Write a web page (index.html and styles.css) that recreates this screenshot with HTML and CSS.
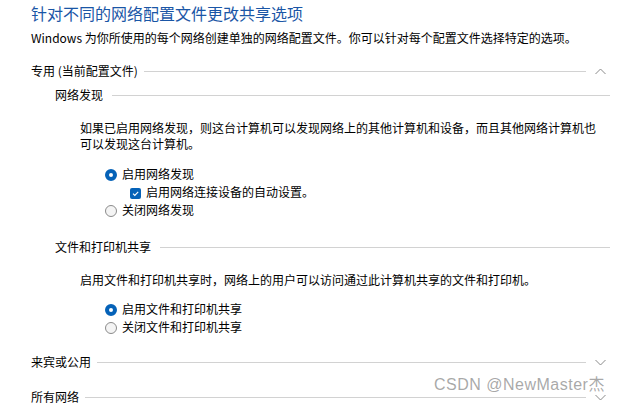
FILE: index.html
```html
<!DOCTYPE html>
<html lang="zh-CN">
<head>
<meta charset="utf-8">
<title>高级共享设置</title>
<link rel="stylesheet" href="styles.css">
</head>
<body>
<div class="page">
  <h1 class="title">针对不同的网络配置文件更改共享选项</h1>
  <p class="intro">Windows 为你所使用的每个网络创建单独的网络配置文件。你可以针对每个配置文件选择特定的选项。</p>

  <section class="profile">
    <div class="profile-head">
      <span class="head-text">专用 (当前配置文件)</span>
      <span class="rule"></span>
      <span class="chev"><svg width="11" height="7" viewBox="0 0 11 7"><polyline points="0.5,6 5.5,1 10.5,6" fill="none" stroke="#8a8a8a" stroke-width="1"/></svg></span>
    </div>

    <div class="group">
      <div class="group-head"><span class="head-text">网络发现</span><span class="rule"></span></div>
      <p class="group-desc">如果已启用网络发现，则这台计算机可以发现网络上的其他计算机和设备，而且其他网络计算机也可以发现这台计算机。</p>
      <div class="options">
        <div class="opt"><span class="radio on"></span><span>启用网络发现</span></div>
        <div class="opt sub"><span class="check"><svg width="11" height="11" viewBox="0 0 11 11"><polyline points="3,5.6 4.8,7.4 8.2,3.8" fill="none" stroke="#fff" stroke-width="1.1"/></svg></span><span>启用网络连接设备的自动设置。</span></div>
        <div class="opt"><span class="radio"></span><span>关闭网络发现</span></div>
      </div>
    </div>

    <div class="group">
      <div class="group-head"><span class="head-text">文件和打印机共享</span><span class="rule"></span></div>
      <p class="group-desc">启用文件和打印机共享时，网络上的用户可以访问通过此计算机共享的文件和打印机。</p>
      <div class="options">
        <div class="opt"><span class="radio on"></span><span>启用文件和打印机共享</span></div>
        <div class="opt"><span class="radio"></span><span>关闭文件和打印机共享</span></div>
      </div>
    </div>
  </section>

  <section class="profile">
    <div class="profile-head">
      <span class="head-text">来宾或公用</span>
      <span class="rule"></span>
      <span class="chev"><svg width="11" height="7" viewBox="0 0 11 7"><polyline points="0.5,1 5.5,6 10.5,1" fill="none" stroke="#8a8a8a" stroke-width="1"/></svg></span>
    </div>
  </section>

  <section class="profile">
    <div class="profile-head">
      <span class="head-text">所有网络</span>
      <span class="rule"></span>
      <span class="chev"><svg width="11" height="7" viewBox="0 0 11 7"><polyline points="0.5,1 5.5,6 10.5,1" fill="none" stroke="#8a8a8a" stroke-width="1"/></svg></span>
    </div>
  </section>
</div>
<div class="watermark">CSDN @NewMaster杰</div>
</body>
</html>
```

FILE: styles.css
```css
html, body {
  margin: 0;
  padding: 0;
  background: #ffffff;
}

body {
  font-family: "Noto Sans CJK SC", "Noto Sans", sans-serif;
  font-size: 12px;
  color: #000000;
  width: 622px;
  height: 405px;
  overflow: hidden;
  position: relative;
}

.page {
  padding: 0 12px 0 31px;
}

.title {
  margin: 0;
  font-size: 16px;
  font-weight: normal;
  line-height: 27px;
  color: #1a56a6;
}

.intro {
  margin: 2px 0 0;
  line-height: 17px;
}

.profile-head,
.group-head {
  display: flex;
  align-items: center;
  height: 18px;
  line-height: 18px;
}

.profile + .profile {
  margin-top: 17px;
}

.profile-head {
  margin-top: 16px;
}

.head-text {
  white-space: nowrap;
}

.rule {
  flex: 1;
  height: 1px;
  background: #d2d2d2;
  margin-left: 6px;
}

.chev {
  width: 24px;
  display: flex;
  justify-content: flex-end;
  padding-right: 4px;
  box-sizing: border-box;
}

.chev svg {
  display: block;
}

.group {
  padding-left: 24px;
}

.group-head {
  margin-top: 6px;
}

.group + .group .group-head {
  margin-top: 19px;
}

.group-head .rule {
  margin-left: 9px;
}

.group-desc {
  margin: 16px 0 0;
  padding-left: 25px;
  width: 522px;
  line-height: 16px;
}

.options {
  margin-top: 12px;
  padding-left: 50px;
}

.group:first-child .options,
.profile-head + .group .options {
  margin-top: 13px;
}

.opt {
  display: flex;
  align-items: center;
  height: 18px;
  line-height: 18px;
}

.opt.sub {
  padding-left: 25px;
}

.radio {
  width: 12px;
  height: 12px;
  box-sizing: border-box;
  border-radius: 50%;
  border: 1px solid #8b8b8b;
  background: #f4f4f4;
  margin-right: 5px;
  flex: none;
  position: relative;
  top: 1px;
}

.radio.on {
  border: 4px solid #0562b8;
  background: #ffffff;
}

.check {
  width: 11px;
  height: 11px;
  border-radius: 2px;
  background: #0562b8;
  margin-right: 5px;
  flex: none;
  position: relative;
  top: 1px;
}

.check svg {
  display: block;
}

.watermark {
  position: absolute;
  left: 434px;
  top: 376px;
  font-family: "Liberation Sans", Arial, "Noto Sans CJK SC", sans-serif;
  font-size: 16px;
  line-height: 18px;
  letter-spacing: 0.5px;
  color: rgba(140, 140, 140, 0.75);
  white-space: nowrap;
}
```
